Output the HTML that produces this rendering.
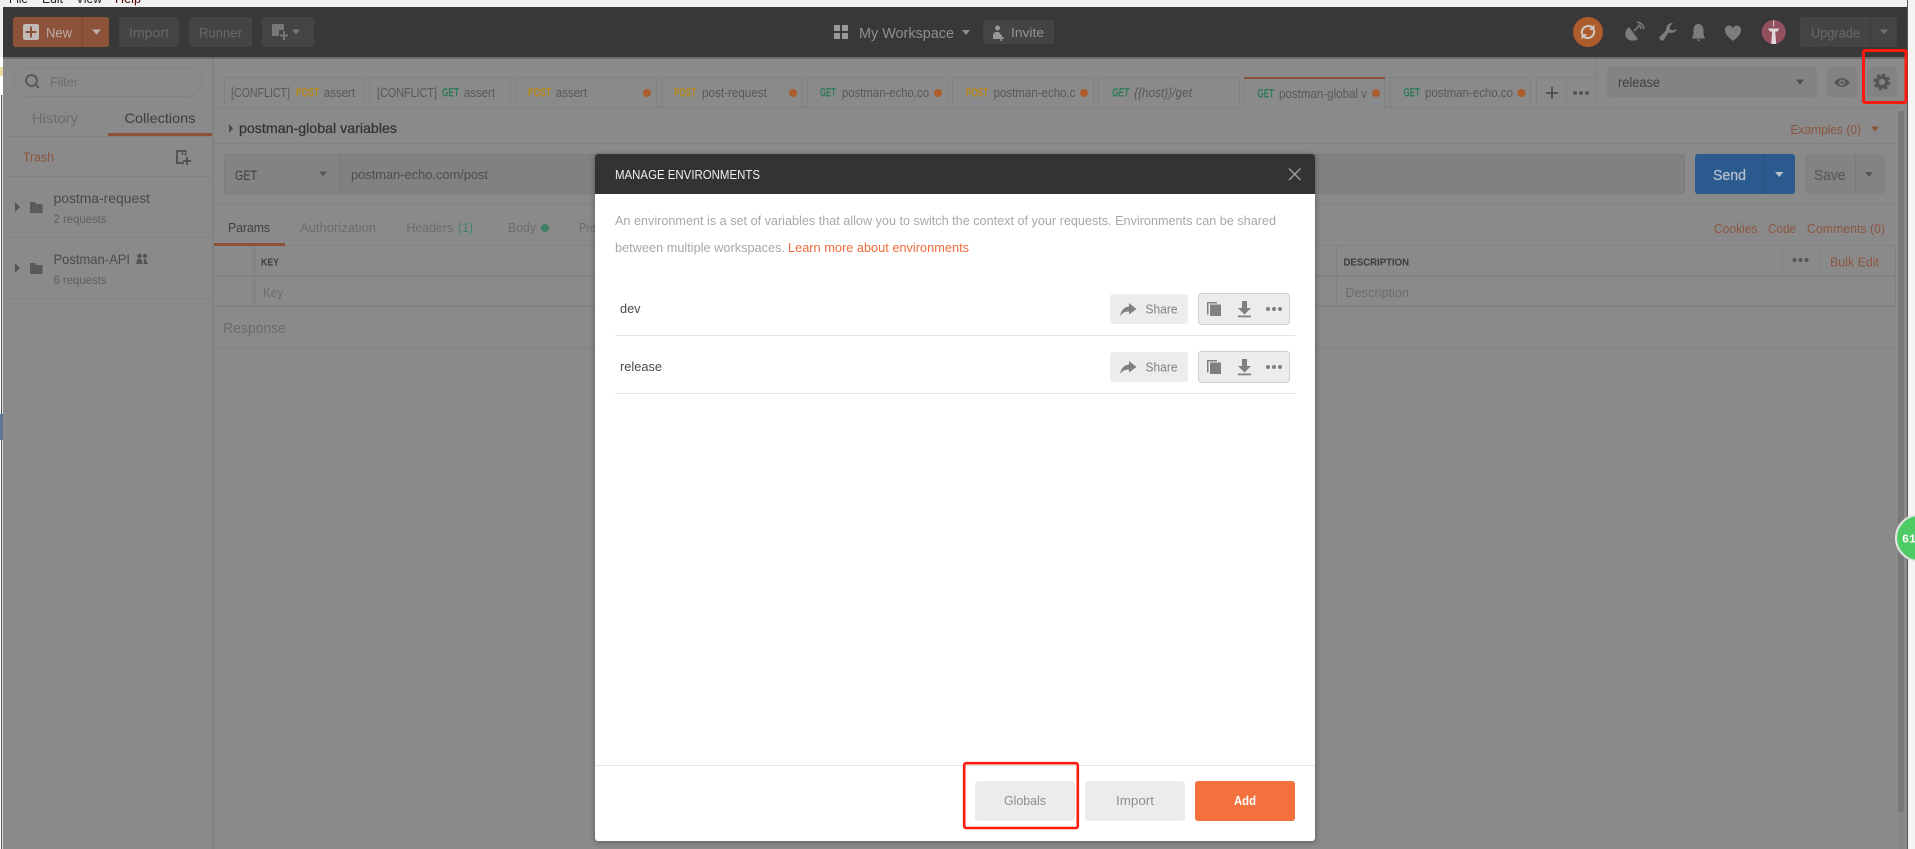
<!DOCTYPE html>
<html lang="en">
<head>
<meta charset="utf-8">
<title>Manage Environments</title>
<style>
html,body{margin:0;padding:0;width:1915px;height:849px;overflow:hidden;background:#f0f0f0}
svg{display:block;position:absolute;left:0;top:0;filter:blur(.3px)}
text{font-family:"Liberation Sans",Arial,sans-serif;font-size:12.5px;fill:#585858}
.d{fill:#6c6c6c}.k{fill:#3f3f3f}.o{fill:#8c5640}.y{fill:#b8891c;font-weight:bold;font-size:11.5px}.g{fill:#2f7a58;font-weight:bold;font-size:11.5px}
.i{font-style:italic}.b{font-weight:bold}.t{fill:#6a6a6a;font-size:13px}
.m{fill:#a8a8a8;font-size:12.5px}.l{fill:#f26b3a;font-size:12.5px}.s{fill:#808080;font-size:13px}
</style>
</head>
<body>
<svg width="1915" height="849" viewBox="0 0 1915 849" xmlns="http://www.w3.org/2000/svg">
<!-- window chrome -->
<rect width="1915" height="849" fill="#f0f0f0"/>
<text x="9" y="3" textLength="19" lengthAdjust="spacingAndGlyphs" style="fill:#222">File</text>
<text x="42" y="3" textLength="21" lengthAdjust="spacingAndGlyphs" style="fill:#222">Edit</text>
<text x="76" y="3" textLength="26" lengthAdjust="spacingAndGlyphs" style="fill:#222">View</text>
<text x="115" y="3" textLength="26" lengthAdjust="spacingAndGlyphs" style="fill:#500">Help</text>
<rect x="0" y="57" width="3" height="792" fill="#fff"/>
<rect x="1" y="95" width="1.2" height="754" fill="#555"/>
<rect x="0" y="67" width="3" height="9" fill="#e8dca0"/>
<rect x="0" y="414" width="3" height="26" fill="#5f7696"/>
<rect x="1907" y="0" width="1" height="849" fill="#555"/>
<rect x="1908" y="0" width="7" height="849" fill="#f4f4f4"/>

<!-- main app -->
<rect x="3" y="57" width="1904" height="792" fill="#8a8a8a"/>
<rect x="3" y="7" width="1904" height="50" fill="#383838"/>
<rect x="3" y="57" width="1904" height="2" fill="#6e6e6e"/>

<!-- header -->
<rect x="13" y="17" width="96" height="30" rx="3" fill="#8d533a"/>
<rect x="82" y="17" width="1" height="30" fill="#7e4a33"/>
<rect x="23" y="24" width="16" height="16" rx="2" fill="#c2bab5"/>
<path d="M31 26.500v11M25.500 32h11" stroke="#8d533a" stroke-width="2"/>
<text x="46" y="37.500" textLength="26" lengthAdjust="spacingAndGlyphs" style="fill:#b9aca7;font-size:13.500px">New</text>
<path d="M92 29.500h9l-4.500 5z" fill="#bdb3ae"/>
<rect x="119" y="17" width="60" height="30" rx="3" fill="#444"/>
<text x="129" y="37.500" textLength="40" lengthAdjust="spacingAndGlyphs" style="fill:#696969;font-size:13.500px">Import</text>
<rect x="189" y="17" width="63" height="30" rx="3" fill="#444"/>
<text x="199" y="37.500" textLength="43" lengthAdjust="spacingAndGlyphs" style="fill:#696969;font-size:13.500px">Runner</text>
<rect x="262" y="17" width="52" height="30" rx="3" fill="#444"/>
<path d="M272 24h12v6h-5v6h-7z" fill="#777"/><path d="M284 31v9M280 35.500h8" stroke="#777" stroke-width="2"/>
<path d="M292 29.500h8l-4 5z" fill="#777"/>
<path d="M834 25h6v6h-6zM842 25h6v6h-6zM834 33h6v6h-6zM842 33h6v6h-6z" fill="#9a9a9a"/>
<text x="859" y="38" textLength="95" lengthAdjust="spacingAndGlyphs" style="fill:#8e8e8e;font-size:15px">My Workspace</text>
<path d="M962 30h8l-4 5z" fill="#8e8e8e"/>
<rect x="983" y="20" width="71" height="24" rx="3" fill="#444"/>
<circle cx="997.500" cy="28" r="2.500" fill="#999"/><path d="M993 39v-4q0-3 4-3h2l2 3v4z" fill="#999"/><path d="M1001 35v6M998 38h6" stroke="#999" stroke-width="1.600"/>
<text x="1011" y="37" textLength="33" lengthAdjust="spacingAndGlyphs" style="fill:#949494;font-size:13px">Invite</text>
<circle cx="1588" cy="32" r="15" fill="#ad5c2d"/>
<path d="M1582 34a6.500 6.500 0 0 1 10.500-6.500M1594 30a6.500 6.500 0 0 1-10.500 6.500" fill="none" stroke="#cfc6bf" stroke-width="2.200"/>
<path d="M1594.500 24.500v5.500h-5.500zM1581.500 39.500v-5.500h5.500z" fill="#cfc6bf"/>
<path d="M1629 27c-5 4-5 10 0 13 3 1 7 1 9-1z" fill="#7c7c7c"/><path d="M1634 31l5-5M1637 22q6 1 7 7M1638 25q3 1 3 4" stroke="#7c7c7c" stroke-width="1.500" fill="none"/>
<path d="M1677 29a6.500 6.500 0 0 1-8.500 3.500l-4 6.500q-2 3-4 1t-.5-3.500l6-6a6.500 6.500 0 0 1 7-7.500l-3.500 3.500 .5 3 3 1z" fill="#7c7c7c"/>
<path d="M1698.500 24c-3.500 0-5 3-5 6.500v3.500l-1.500 4.500h13l-1.500-4.500v-3.500c0-3.500-1.500-6.500-5-6.500zM1696.500 39.500h4l-2 2z" fill="#7c7c7c"/>
<path d="M1733 41c-5-4-8-7-8-11 0-5 6-6 8-2 2-4 8-3 8 2 0 4-3 7-8 11z" fill="#7c7c7c"/>
<circle cx="1773.700" cy="32" r="12" fill="#93505f"/>
<path d="M1773.200 20.500h1v6h-1zM1768 28.500h11.400l-2 3h-7.400zM1772.200 31h3l1 13h-5z" fill="#e0d8da"/>
<rect x="1800" y="17" width="97" height="30" rx="3" fill="#444"/>
<rect x="1870" y="17" width="1" height="30" fill="#3c3c3c"/>
<text x="1811" y="37.500" textLength="49" lengthAdjust="spacingAndGlyphs" style="fill:#696969;font-size:13.500px">Upgrade</text>
<path d="M1880 29.500h8l-4 5z" fill="#6f6f6f"/>

<!-- sidebar -->
<rect x="212" y="59" width="2" height="790" fill="#828282"/>
<rect x="14" y="67.500" width="188" height="29" rx="14.500" fill="none" stroke="#838383"/>
<circle cx="31.500" cy="80.500" r="5.500" fill="none" stroke="#5a5a5a" stroke-width="2"/><path d="M35.500 84.500l3.500 3.500" stroke="#5a5a5a" stroke-width="2.200"/>
<text x="50" y="86.500" textLength="28" lengthAdjust="spacingAndGlyphs" class="d">Filter</text>
<text x="32" y="123" textLength="46" lengthAdjust="spacingAndGlyphs" class="d" style="font-size:14px">History</text>
<text x="124.500" y="123" textLength="71" lengthAdjust="spacingAndGlyphs" class="k" style="font-size:14px">Collections</text>
<rect x="3" y="136" width="209" height="1" fill="#828282"/>
<rect x="108" y="133" width="104" height="3" fill="#8d5138"/>
<text x="23" y="161.500" textLength="31" lengthAdjust="spacingAndGlyphs" class="o">Trash</text>
<path d="M186 151h-9v12h7" fill="none" stroke="#4e4e4e" stroke-width="1.800"/><path d="M182 151v3h4v2M186 150v4" fill="none" stroke="#4e4e4e" stroke-width="1"/><path d="M187 157v8M183 161h8" stroke="#4e4e4e" stroke-width="1.800"/>
<rect x="3" y="176" width="209" height="1" fill="#828282"/>
<rect x="3" y="237" width="209" height="1" fill="#828282"/>
<rect x="3" y="298" width="209" height="1" fill="#828282"/>
<path d="M15 202l5 5-5 5z" fill="#555"/><path d="M15 263l5 5-5 5z" fill="#555"/>
<path d="M30 202h5l1 2h6.500v9H30z" fill="#5a5a5a"/><path d="M30 263h5l1 2h6.500v9H30z" fill="#5a5a5a"/>
<text x="53.500" y="203" textLength="96.500" lengthAdjust="spacingAndGlyphs" style="font-size:13.500px;fill:#4a4a4a">postma-request</text>
<text x="53.500" y="223" textLength="53" lengthAdjust="spacingAndGlyphs" style="font-size:12px;fill:#5f5f5f">2 requests</text>
<text x="53.500" y="264" textLength="76.500" lengthAdjust="spacingAndGlyphs" style="font-size:13.500px;fill:#4a4a4a">Postman-API</text>
<circle cx="139.500" cy="256" r="2.200" fill="#555"/><circle cx="145" cy="256" r="2.200" fill="#555"/><path d="M136 264l1.500-5h4l1 5zM144 259h1.500l2.500 5h-4.500z" fill="#555"/>
<text x="53.500" y="284" textLength="53" lengthAdjust="spacingAndGlyphs" style="font-size:12px;fill:#5f5f5f">6 requests</text>

<!-- tabs -->
<rect x="213" y="107" width="1685" height="1" fill="#818181"/>
<rect x="1596" y="59" width="1" height="48" fill="#818181"/>
<g fill="none" stroke="#818181">
<path d="M224.500 107V79.500q0-2 2-2h136q2 0 2 2V107"/>
<path d="M369.500 107V79.500q0-2 2-2h137q2 0 2 2V107"/>
<path d="M515.500 107V79.500q0-2 2-2h137q2 0 2 2V107"/>
<path d="M661.500 107V79.500q0-2 2-2h137q2 0 2 2V107"/>
<path d="M807.500 107V79.500q0-2 2-2h136q2 0 2 2V107"/>
<path d="M952.500 107V79.500q0-2 2-2h137q2 0 2 2V107"/>
<path d="M1098.500 107V79.500q0-2 2-2h137q2 0 2 2V107"/>
<path d="M1244.500 108V78h140v30"/>
<path d="M1390.500 107V79.500q0-2 2-2h136q2 0 2 2V107"/>
<path d="M1536.500 107V79.500q0-2 2-2h56q2 0 2 2V107M1566.500 78V107"/>
</g>
<rect x="1245" y="107" width="139" height="1" fill="#8a8a8a"/>
<rect x="1244" y="77" width="141" height="2" fill="#8d5138"/>
<text x="231" y="97" textLength="59" lengthAdjust="spacingAndGlyphs">[CONFLICT]</text>
<text x="296" y="96.500" textLength="23" lengthAdjust="spacingAndGlyphs" class="y">POST</text>
<text x="324" y="97" textLength="31" lengthAdjust="spacingAndGlyphs">assert</text>
<text x="377" y="97" textLength="60" lengthAdjust="spacingAndGlyphs">[CONFLICT]</text>
<text x="442" y="96.500" textLength="17" lengthAdjust="spacingAndGlyphs" class="g">GET</text>
<text x="464" y="97" textLength="31" lengthAdjust="spacingAndGlyphs">assert</text>
<text x="528" y="96.500" textLength="23" lengthAdjust="spacingAndGlyphs" class="y">POST</text>
<text x="556" y="97" textLength="31" lengthAdjust="spacingAndGlyphs">assert</text>
<circle cx="647" cy="93" r="4" fill="#ad5c2d"/>
<text x="674" y="96.500" textLength="22" lengthAdjust="spacingAndGlyphs" class="y">POST</text>
<text x="702" y="97" textLength="65" lengthAdjust="spacingAndGlyphs">post-request</text>
<circle cx="793" cy="93" r="4" fill="#ad5c2d"/>
<text x="820" y="96.500" textLength="16" lengthAdjust="spacingAndGlyphs" class="g">GET</text>
<text x="842" y="97" textLength="87" lengthAdjust="spacingAndGlyphs">postman-echo.co</text>
<circle cx="938" cy="93" r="4" fill="#ad5c2d"/>
<text x="966" y="96.500" textLength="22" lengthAdjust="spacingAndGlyphs" class="y">POST</text>
<text x="993.500" y="97" textLength="82" lengthAdjust="spacingAndGlyphs">postman-echo.c</text>
<circle cx="1084" cy="93" r="4" fill="#ad5c2d"/>
<text x="1112" y="96.500" textLength="17" lengthAdjust="spacingAndGlyphs" class="g i">GET</text>
<text x="1134" y="97" textLength="58" lengthAdjust="spacingAndGlyphs" class="i">{{host}}/get</text>
<text x="1257.500" y="97.500" textLength="16.500" lengthAdjust="spacingAndGlyphs" class="g">GET</text>
<text x="1279" y="98" textLength="88" lengthAdjust="spacingAndGlyphs">postman-global v</text>
<circle cx="1376" cy="93" r="4" fill="#ad5c2d"/>
<text x="1403.500" y="96.500" textLength="16.500" lengthAdjust="spacingAndGlyphs" class="g">GET</text>
<text x="1425" y="97" textLength="88" lengthAdjust="spacingAndGlyphs">postman-echo.co</text>
<circle cx="1521.500" cy="93" r="4" fill="#ad5c2d"/>
<path d="M1552 87v12M1546 93h12" stroke="#4e4e4e" stroke-width="1.800"/>
<circle cx="1575" cy="93" r="2" fill="#555"/><circle cx="1581" cy="93" r="2" fill="#555"/><circle cx="1587" cy="93" r="2" fill="#555"/>

<!-- env selector -->
<rect x="1607" y="67" width="210" height="30" rx="3" fill="#838383"/>
<text x="1618" y="87" textLength="42" lengthAdjust="spacingAndGlyphs" class="k" style="font-size:13.500px">release</text>
<path d="M1796 79.500h8l-4 5z" fill="#4e4e4e"/>
<rect x="1827" y="67" width="30" height="30" rx="3" fill="#838383"/>
<path d="M1834 82.500q8-9 16 0q-8 9-16 0z" fill="#555"/><circle cx="1842" cy="82.500" r="3" fill="#838383"/><circle cx="1842" cy="82.500" r="1.500" fill="#555"/>
<rect x="1867" y="67" width="30" height="30" rx="3" fill="#838383"/>
<circle cx="1882" cy="82" r="4.800" fill="none" stroke="#555" stroke-width="3.400"/>
<circle cx="1882" cy="82" r="7" fill="none" stroke="#555" stroke-width="3" stroke-dasharray="3 2.500"/>

<!-- builder -->
<path d="M229 124l4 4.500-4 4.500z" fill="#4a4a4a"/>
<text x="239" y="133" textLength="158" lengthAdjust="spacingAndGlyphs" style="fill:#333;font-size:14px;stroke:#333;stroke-width:.25px">postman-global variables</text>
<text x="1790.500" y="134" textLength="70.500" lengthAdjust="spacingAndGlyphs" class="o">Examples (0)</text>
<path d="M1871 126.500h8l-4 5z" fill="#8d5138"/>
<rect x="214" y="143" width="1681" height="1" fill="#828282"/>
<rect x="224.500" y="154.500" width="1460" height="39" rx="2" fill="#818181" stroke="#7c7c7c"/>
<rect x="225" y="155" width="114" height="38" fill="#838383"/>
<rect x="339.500" y="155" width="1" height="38" fill="#7a7a7a"/>
<text x="235" y="180" textLength="22" lengthAdjust="spacingAndGlyphs" class="k" style="font-size:13.500px">GET</text>
<path d="M319 171.500h8l-4 5z" fill="#5a5a5a"/>
<text x="351" y="179" textLength="137" lengthAdjust="spacingAndGlyphs" style="font-size:13px;fill:#4e4e4e">postman-echo.com/post</text>
<rect x="1695" y="154" width="100" height="40" rx="3" fill="#2a5a8e"/>
<rect x="1764" y="154" width="1" height="40" fill="#27527f"/>
<text x="1713" y="180" textLength="33" lengthAdjust="spacingAndGlyphs" style="fill:#b5c0cc;font-size:15px;stroke:#b5c0cc;stroke-width:.25px">Send</text>
<path d="M1775 172h8.500l-4.250 5z" fill="#b5c0cc"/>
<rect x="1805" y="154" width="80" height="40" rx="3" fill="#838383"/>
<rect x="1855" y="154" width="1" height="40" fill="#7b7b7b"/>
<text x="1814" y="180" textLength="31.500" lengthAdjust="spacingAndGlyphs" style="fill:#5c5c5c;font-size:15px;stroke:#5c5c5c;stroke-width:.25px">Save</text>
<path d="M1865 172h8l-4 5z" fill="#555"/>
<rect x="214" y="204" width="1681" height="1" fill="#828282"/>
<text x="228" y="232" textLength="42" lengthAdjust="spacingAndGlyphs" class="k">Params</text>
<text x="300" y="232" textLength="76" lengthAdjust="spacingAndGlyphs" class="d">Authorization</text>
<text x="406.500" y="232" textLength="46.500" lengthAdjust="spacingAndGlyphs" class="d">Headers</text>
<text x="458" y="232" textLength="15" lengthAdjust="spacingAndGlyphs" style="fill:#3f8064">(1)</text>
<text x="508" y="232" textLength="28" lengthAdjust="spacingAndGlyphs" class="d">Body</text>
<circle cx="545" cy="228" r="4" fill="#3f8064"/>
<text x="579" y="232" textLength="17" lengthAdjust="spacingAndGlyphs" class="d">Pre</text>
<text x="1714" y="233" textLength="43.500" lengthAdjust="spacingAndGlyphs" class="o">Cookies</text>
<text x="1768" y="233" textLength="28" lengthAdjust="spacingAndGlyphs" class="o">Code</text>
<text x="1807" y="233" textLength="78" lengthAdjust="spacingAndGlyphs" class="o">Comments (0)</text>
<rect x="214" y="245" width="1681" height="1" fill="#828282"/>
<rect x="214" y="243" width="71" height="3" fill="#8d5138"/>
<rect x="214" y="275" width="1681" height="2" fill="#828282"/>
<rect x="214" y="305" width="1681" height="2" fill="#828282"/>
<rect x="253" y="246" width="2.500" height="60" fill="#828282"/>
<rect x="1336" y="246" width="1" height="60" fill="#828282"/>
<rect x="1895" y="245" width="1" height="61" fill="#828282"/>
<rect x="1782" y="250" width="1" height="22" fill="#828282"/>
<rect x="1819" y="250" width="1" height="22" fill="#828282"/>
<text x="261" y="265.500" textLength="18" lengthAdjust="spacingAndGlyphs" class="b" style="font-size:10.500px;fill:#3c3c3c">KEY</text>
<text x="1343.500" y="265.500" textLength="65.500" lengthAdjust="spacingAndGlyphs" class="b" style="font-size:10.500px;fill:#3c3c3c">DESCRIPTION</text>
<circle cx="1794.500" cy="260" r="2" fill="#555"/><circle cx="1800.500" cy="260" r="2" fill="#555"/><circle cx="1806.500" cy="260" r="2" fill="#555"/>
<text x="1830" y="266.500" textLength="49" lengthAdjust="spacingAndGlyphs" class="o">Bulk Edit</text>
<text x="263" y="297" textLength="20" lengthAdjust="spacingAndGlyphs" class="d">Key</text>
<text x="1345.500" y="297" textLength="63.500" lengthAdjust="spacingAndGlyphs" class="d">Description</text>
<text x="223" y="333" textLength="63" lengthAdjust="spacingAndGlyphs" class="d" style="font-size:14.500px">Response</text>
<rect x="214" y="348" width="1681" height="1" fill="#828282"/>
<!-- scrollbar -->
<rect x="1898" y="111" width="6" height="738" fill="#868686"/>
<rect x="1898" y="111" width="6" height="701" rx="2" fill="#787878"/>
<rect x="1904" y="57" width="3" height="792" fill="#8a8a8a"/>

<!-- annotation: gear -->
<rect x="1863.500" y="50.500" width="42.500" height="52" rx="1.500" fill="none" stroke="#ff1a10" stroke-width="3"/>

<!-- modal -->
<rect x="595" y="154" width="720" height="687" rx="3" fill="#fff" style="filter:drop-shadow(0 1px 3px rgba(0,0,0,.35))"/>
<path d="M595 194V157q0-3 3-3h714q3 0 3 3v37z" fill="#333"/>
<text x="615" y="179" textLength="145" lengthAdjust="spacingAndGlyphs" style="fill:#f0f0f0;font-size:13px">MANAGE ENVIRONMENTS</text>
<path d="M1289 168.500l11.500 11.500M1300.500 168.500L1289 180" stroke="#9a9a9a" stroke-width="1.500"/>
<text x="615" y="225" textLength="661" lengthAdjust="spacingAndGlyphs" class="m">An environment is a set of variables that allow you to switch the context of your requests. Environments can be shared</text>
<text x="615" y="252" textLength="170" lengthAdjust="spacingAndGlyphs" class="m">between multiple workspaces.</text>
<text x="788" y="252" textLength="181" lengthAdjust="spacingAndGlyphs" class="l">Learn more about environments</text>
<text x="620" y="313" textLength="20.500" lengthAdjust="spacingAndGlyphs" style="font-size:13px;fill:#4a4a4a">dev</text>
<text x="620" y="371" textLength="42" lengthAdjust="spacingAndGlyphs" style="font-size:13px;fill:#4a4a4a">release</text>
<rect x="615" y="335" width="680" height="1" fill="#e4e4e4"/>
<rect x="615" y="393" width="680" height="1" fill="#e4e4e4"/>
<g>
<rect x="1110" y="294" width="78" height="30" rx="3" fill="#ececec"/>
<path d="M1129 303L1136.500 309 1129 314.500V311.500C1125 311.500 1122 313 1120 316 1121 310.500 1124 307 1129 306.500Z" fill="#808080"/>
<text x="1145.500" y="313.500" textLength="32" lengthAdjust="spacingAndGlyphs" class="s">Share</text>
<rect x="1198.500" y="293.500" width="91" height="31" rx="3" fill="#ececec" stroke="#cfcfcf"/>
<path d="M1207 302h10v1.500h-8.500v11H1207z" fill="#808080"/><rect x="1210" y="304.500" width="11" height="11.500" fill="#808080"/>
<path d="M1242 301h5v7h4l-6.500 6.500-6.500-6.500h4z" fill="#808080"/><rect x="1238" y="315.500" width="13" height="1.800" fill="#808080"/>
<circle cx="1268" cy="309" r="2" fill="#808080"/><circle cx="1274" cy="309" r="2" fill="#808080"/><circle cx="1280" cy="309" r="2" fill="#808080"/>
</g>
<g transform="translate(0 58)">
<rect x="1110" y="294" width="78" height="30" rx="3" fill="#ececec"/>
<path d="M1129 303L1136.500 309 1129 314.500V311.500C1125 311.500 1122 313 1120 316 1121 310.500 1124 307 1129 306.500Z" fill="#808080"/>
<text x="1145.500" y="313.500" textLength="32" lengthAdjust="spacingAndGlyphs" class="s">Share</text>
<rect x="1198.500" y="293.500" width="91" height="31" rx="3" fill="#ececec" stroke="#cfcfcf"/>
<path d="M1207 302h10v1.500h-8.500v11H1207z" fill="#808080"/><rect x="1210" y="304.500" width="11" height="11.500" fill="#808080"/>
<path d="M1242 301h5v7h4l-6.500 6.500-6.500-6.500h4z" fill="#808080"/><rect x="1238" y="315.500" width="13" height="1.800" fill="#808080"/>
<circle cx="1268" cy="309" r="2" fill="#808080"/><circle cx="1274" cy="309" r="2" fill="#808080"/><circle cx="1280" cy="309" r="2" fill="#808080"/>
</g>
<rect x="595" y="765" width="720" height="1" fill="#e6e6e6"/>
<rect x="975" y="781" width="100" height="40" rx="3" fill="#ececec"/>
<text x="1004" y="805" textLength="42" lengthAdjust="spacingAndGlyphs" style="font-size:12.500px;fill:#8e8e8e">Globals</text>
<rect x="1085" y="781" width="100" height="40" rx="3" fill="#ececec"/>
<text x="1116" y="805" textLength="38" lengthAdjust="spacingAndGlyphs" style="font-size:12.500px;fill:#8e8e8e">Import</text>
<rect x="1195" y="781" width="100" height="40" rx="3" fill="#f4703c"/>
<text x="1234" y="805" textLength="22" lengthAdjust="spacingAndGlyphs" class="b" style="font-size:12.500px;fill:#fff">Add</text>
<rect x="964.200" y="763.200" width="113.600" height="64.800" rx="2" fill="none" stroke="#ff1a10" stroke-width="2.600"/>

<!-- floating badge -->
<circle cx="1919" cy="538" r="23" fill="#4fcb66" stroke="#e4e4e4" stroke-width="2"/>
<text x="1902" y="542.500" textLength="14" lengthAdjust="spacingAndGlyphs" style="font-family:'Liberation Mono',monospace;font-weight:bold;font-size:12px;fill:#fff">61</text>
</svg>
</body>
</html>
